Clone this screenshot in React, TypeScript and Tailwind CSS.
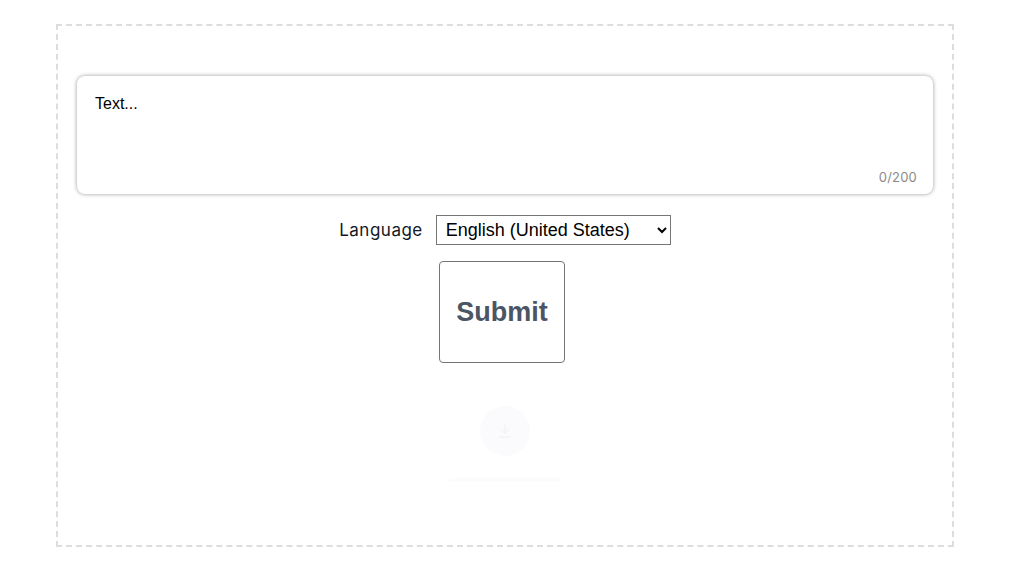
import { useState } from 'react';

export default function App() {
  const [text, setText] = useState('');
  const [lang, setLang] = useState('en-US');

  return (
    <div className="min-h-[576px] bg-white pl-[56px] pt-[24px] font-['Liberation_Sans',Arial,sans-serif]">
      <div className="flex h-[523px] w-[898px] flex-col items-center border-2 border-dashed border-[#dddddd] px-[19px] pt-[50px]">
        {/* Text input */}
        <div className="relative h-[118px] w-full rounded-[8px] bg-white shadow-[0_0_4px_rgba(0,0,0,0.4)]">
          <textarea
            value={text}
            onChange={(e) => setText(e.target.value.slice(0, 200))}
            placeholder="Text..."
            className="h-full w-full resize-none rounded-[8px] bg-transparent px-[18px] pt-[18px] text-[16px] leading-[20px] text-black outline-none placeholder:text-black"
          />
          <span className="absolute bottom-[7px] right-[16px] font-['Inter',sans-serif] text-[13px] tracking-[0.2px] text-[#8a8a8a]">
            {text.length}/200
          </span>
        </div>

        {/* Language */}
        <div className="mt-[21px] flex items-center gap-[13px]">
          <label className="pt-[2px] font-['Inter',sans-serif] text-[17px] tracking-[0.5px] text-[#111827]">Language</label>
          <select
            value={lang}
            onChange={(e) => setLang(e.target.value)}
            className="h-[30px] w-[235px] border border-[#767676] bg-white pl-[5px] text-[18px] text-black"
          >
            <option value="en-US">English (United States)</option>
            <option value="en-GB">English (United Kingdom)</option>
            <option value="fr-FR">French (France)</option>
          </select>
        </div>

        {/* Submit */}
        <button className="mr-[6px] mt-[16px] h-[102px] w-[126px] rounded-[4px] border border-[#767676] bg-white text-[27px] font-bold text-[#4b5563]">
          Submit
        </button>

        {/* Faint result card */}
        <div className="mt-[30px] flex h-[92px] w-[127px] flex-col items-center rounded-[4px] border border-[#fefefe] bg-white pt-[12px]">
          <div className="flex h-[50px] w-[50px] items-center justify-center rounded-full bg-[#fbfbfe]">
            <svg width="18" height="18" viewBox="0 0 24 24" fill="none" stroke="#f3f3f6" strokeWidth="2">
              <path d="M12 3v12M7 10l5 5 5-5M4 20h16" />
            </svg>
          </div>
          <div className="mt-[22px] h-[4px] w-[112px] rounded bg-[#fcfcfc]" />
        </div>
      </div>
    </div>
  );
}
